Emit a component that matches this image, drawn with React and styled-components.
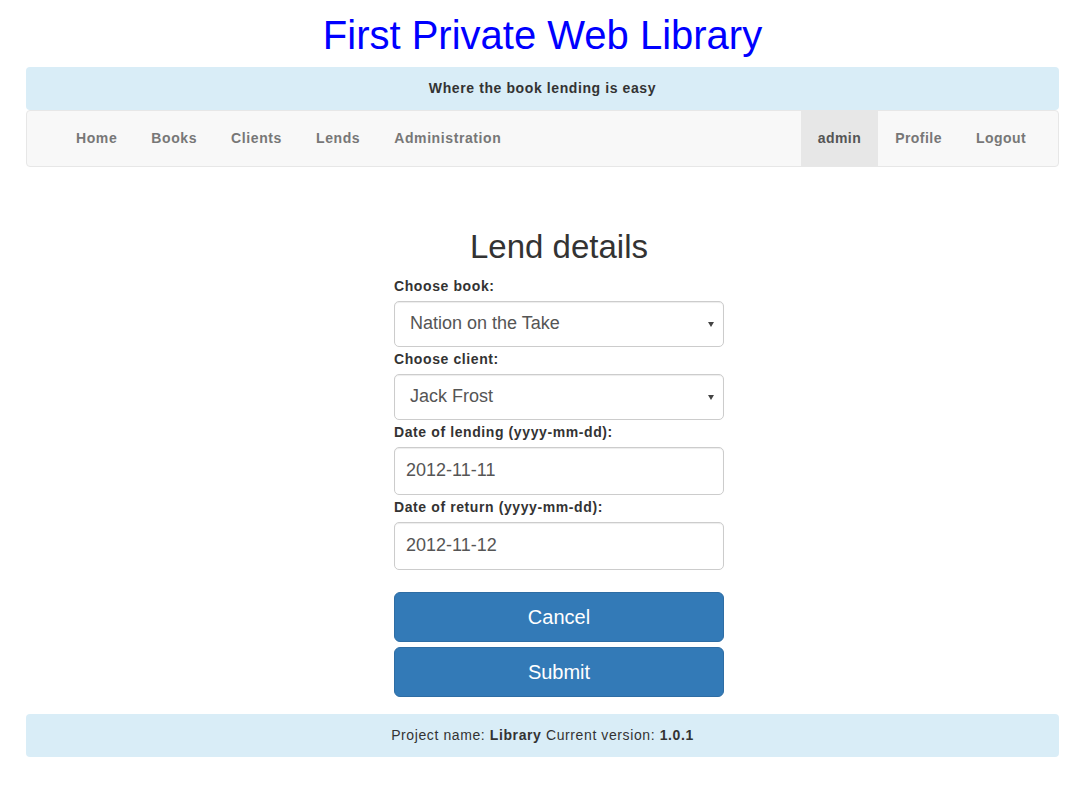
import React from "react";
import styled, { createGlobalStyle } from "styled-components";

const Global = createGlobalStyle`
  html, body { margin: 0; padding: 0; background: #fff; }
  body {
    font-family: "Liberation Sans", Arial, Helvetica, sans-serif;
    font-size: 14px;
    line-height: 1.42857;
    color: #333;
    letter-spacing: 0.6px;
  }
  * { box-sizing: border-box; }
`;

const Page = styled.div`
  width: 1033px;
  margin-left: 26px;
`;

const Title = styled.h1`
  margin: 0;
  padding-top: 12px;
  height: 67px;
  text-align: center;
  font-family: "Liberation Sans", Arial, sans-serif;
  font-weight: normal;
  font-size: 40px;
  line-height: 46px;
  letter-spacing: 0;
  color: #0000ff;
`;

const InfoBar = styled.div`
  background: #d9edf7;
  border-radius: 4px;
  text-align: center;
  height: ${(p) => p.$h}px;
  display: flex;
  align-items: center;
  justify-content: center;
  padding-top: 1px;
  font-weight: ${(p) => (p.$bold ? "bold" : "normal")};
  color: #333;
`;

const Navbar = styled.nav`
  height: 57px;
  background: #f8f8f8;
  border: 1px solid #e7e7e7;
  border-radius: 4px;
  display: flex;
  justify-content: space-between;
  padding: 0 15px 0 32px;
`;

const NavList = styled.ul`
  list-style: none;
  margin: 0;
  padding: 0;
  display: flex;
  letter-spacing: ${(p) => (p.$right ? "0.45px" : "0.6px")};
`;

const NavItem = styled.li`
  display: flex;
  align-items: center;
  padding: 1px 17px 0;
  height: 55px;
  font-weight: bold;
  color: ${(p) => (p.$active ? "#555" : "#777")};
  background: ${(p) => (p.$active ? "#e7e7e7" : "transparent")};
`;

const Main = styled.main`
  display: flex;
  flex-direction: column;
  align-items: center;
  padding-top: 61px;
  padding-left: 33px;
`;

const Heading = styled.h2`
  margin: 0 0 10px;
  font-size: 33px;
  font-weight: normal;
  line-height: 38px;
  letter-spacing: 0;
  color: #333;
`;

const Form = styled.form`
  width: 330px;
  display: flex;
  flex-direction: column;
`;

const Label = styled.label`
  display: block;
  font-weight: bold;
  font-size: 14px;
  line-height: 20px;
  margin-bottom: 5px;
`;

const Field = styled.div`
  margin-bottom: ${(p) => p.$mb || 2}px;
`;

const Box = styled.div`
  position: relative;
  height: ${(p) => p.$h}px;
  border: 1px solid #ccc;
  border-radius: 5px;
  background: #fff;
  display: flex;
  align-items: center;
  padding-left: ${(p) => p.$pl}px;
  font-size: 18px;
  letter-spacing: 0;
  color: #555;
  box-shadow: inset 0 1px 1px rgba(0, 0, 0, 0.075);
`;

const Caret = styled.span`
  position: absolute;
  right: 9px;
  top: 50%;
  margin-top: -2px;
  width: 0;
  height: 0;
  border-left: 3px solid transparent;
  border-right: 3px solid transparent;
  border-top: 5px solid #444;
`;

const Button = styled.button`
  width: 330px;
  height: 50px;
  margin-bottom: 5px;
  background: #337ab7;
  border: 1px solid #2e6da4;
  border-radius: 6px;
  color: #fff;
  font-family: "Liberation Sans", Arial, sans-serif;
  font-size: 20px;
  letter-spacing: 0;
  cursor: pointer;
`;

const Footer = styled.div`
  margin-top: 12px;
`;

export default function App() {
  return (
    <>
      <Global />
      <Page>
        <Title>First Private Web Library</Title>
        <InfoBar $h={43} $bold>Where the book lending is easy</InfoBar>
        <Navbar>
          <NavList>
            <NavItem>Home</NavItem>
            <NavItem>Books</NavItem>
            <NavItem>Clients</NavItem>
            <NavItem>Lends</NavItem>
            <NavItem>Administration</NavItem>
          </NavList>
          <NavList $right>
            <NavItem $active>admin</NavItem>
            <NavItem>Profile</NavItem>
            <NavItem>Logout</NavItem>
          </NavList>
        </Navbar>
        <Main>
          <Heading>Lend details</Heading>
          <Form onSubmit={(e) => e.preventDefault()}>
            <Field>
              <Label>Choose book:</Label>
              <Box $h={46} $pl={15}>
                Nation on the Take
                <Caret />
              </Box>
            </Field>
            <Field>
              <Label>Choose client:</Label>
              <Box $h={46} $pl={15}>
                Jack Frost
                <Caret />
              </Box>
            </Field>
            <Field>
              <Label>Date of lending (yyyy-mm-dd):</Label>
              <Box $h={48} $pl={11}>2012-11-11</Box>
            </Field>
            <Field $mb={22}>
              <Label>Date of return (yyyy-mm-dd):</Label>
              <Box $h={48} $pl={11}>2012-11-12</Box>
            </Field>
            <Button type="button">Cancel</Button>
            <Button type="submit">Submit</Button>
          </Form>
        </Main>
        <Footer>
          <InfoBar $h={43}>
            <span>
              Project name: <b>Library</b> Current version: <b>1.0.1</b>
            </span>
          </InfoBar>
        </Footer>
      </Page>
    </>
  );
}
